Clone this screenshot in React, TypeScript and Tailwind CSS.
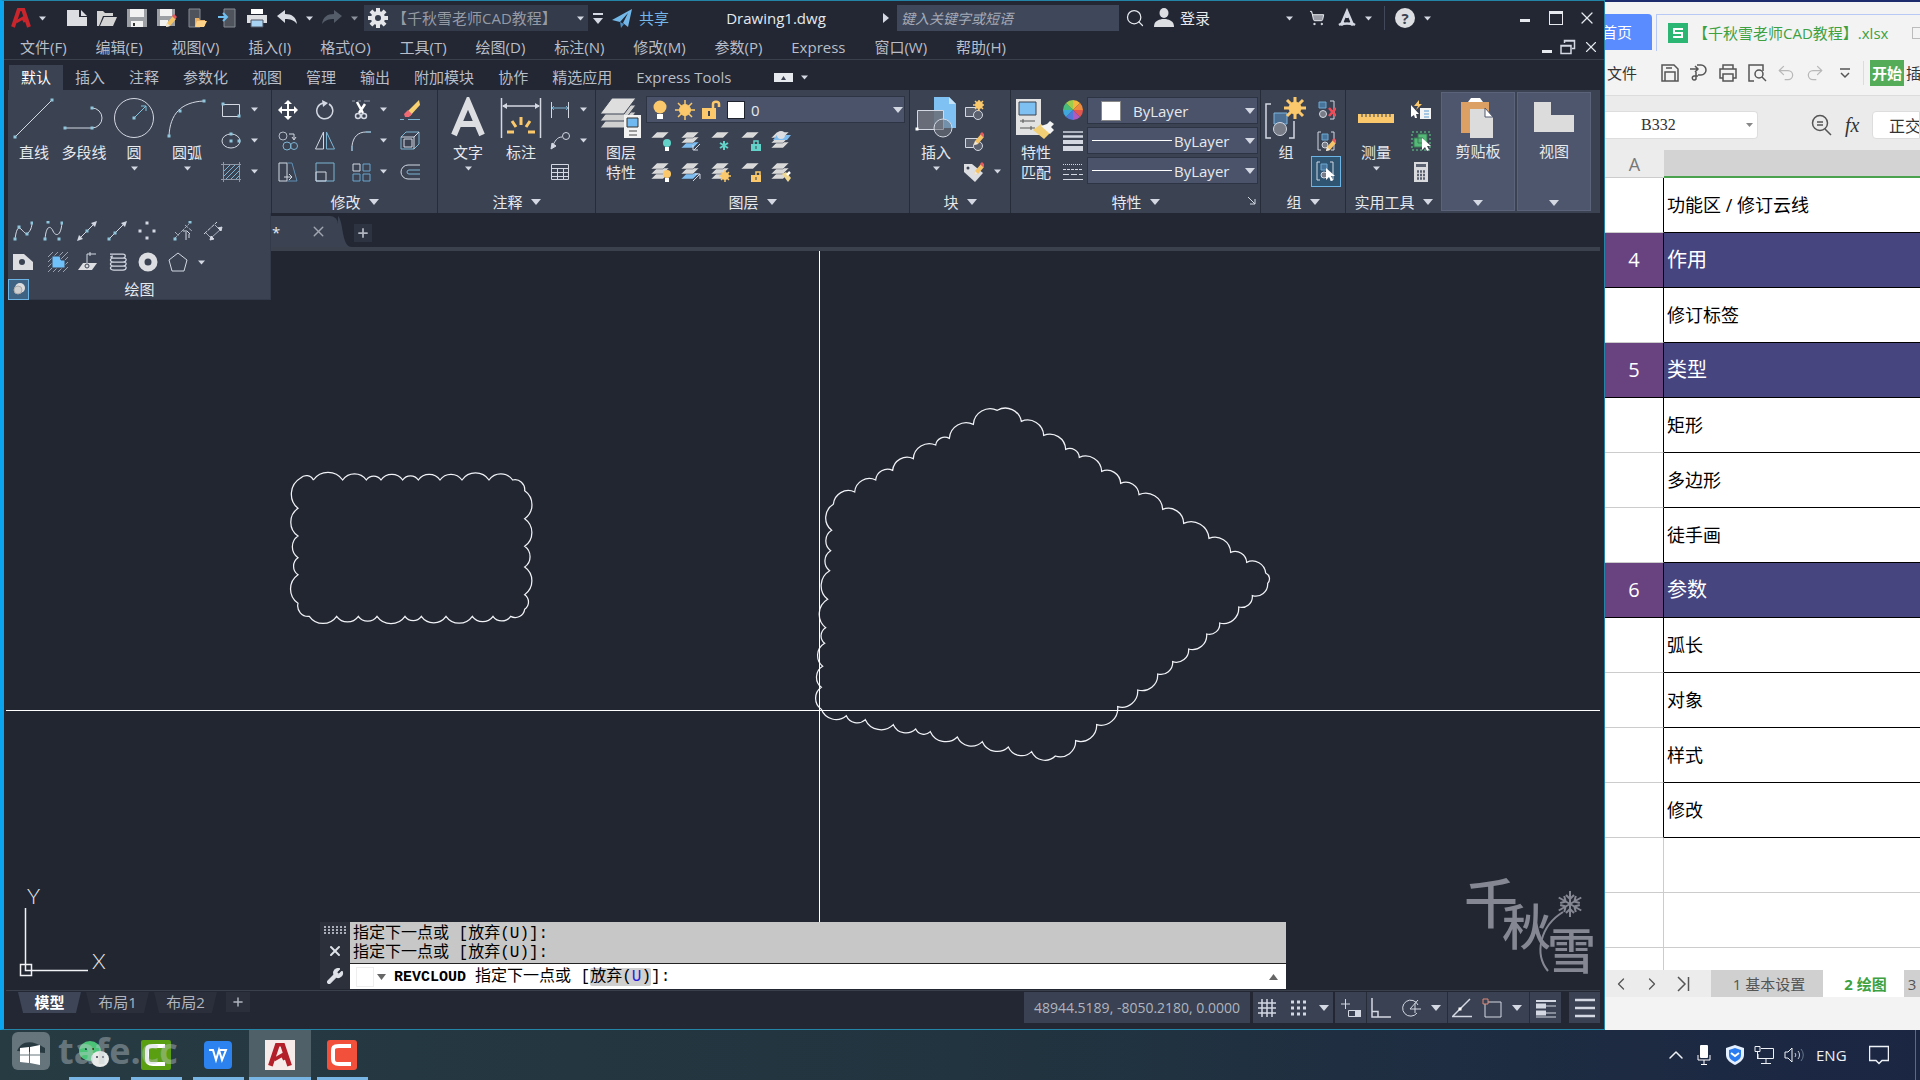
import React from 'react';
import { ChevronLeft, ChevronRight, ChevronUp, Plus, Redo2, Search, ShoppingCart, Undo2, Wrench, X } from 'lucide-react';

type Point = [number, number];

interface SvgProps {
  w?: number;
  h?: number;
  box?: string;
  children: React.ReactNode;
}

const Svg: React.FC<SvgProps> = ({ w = 20, h = 20, box, children }) => (
  <svg width={w} height={h} viewBox={box ?? `0 0 ${w} ${h}`} fill="none" stroke="#d3d8e2" className="shrink-0" aria-hidden="true">
    {children}
  </svg>
);

const Caret: React.FC<{ big?: boolean }> = ({ big }) => (
  <svg width={big ? 10 : 7} height={big ? 6 : 5} viewBox="0 0 10 6" className="shrink-0" aria-hidden="true">
    <path d="M0 0h10L5 6z" fill="#d3d8e2" />
  </svg>
);

const Dot: React.FC<{ x: number; y: number; c?: string }> = ({ x, y, c = '#8fc6dc' }) => (
  <rect x={x - 1.5} y={y - 1.5} width="3" height="3" fill={c} stroke="none" />
);

const Pencil = () => (
  <g stroke="none">
    <path d="M10 17l1-4 6-7 3 3-6 7z" fill="#f5c469" />
    <path d="M16 6l2-2 3 3-2 2z" fill="#e8585f" />
    <path d="M10 17l1-4 3 3z" fill="#e8e8e8" />
  </g>
);

/* ---------- quick access icons ---------- */

const quickIcons = [
  { name: '新建', icon: <Svg w={22}><path d="M1 2h12v7h8v9H1z" fill="#dcdee2" stroke="none" /><path d="M15 2l6 6h-6z" fill="#dcdee2" stroke="none" /></Svg> },
  { name: '打开', icon: <Svg><path d="M0 18V3h6l2 2h8v3H6L2 18z" fill="#d4d4d4" stroke="none" /><path d="M7 9h13l-4 9H3z" fill="#d4d4d4" stroke="none" /></Svg> },
  { name: '保存', icon: <Svg><path d="M0 1h20v18H0z" fill="#9c9fa3" stroke="none" /><path d="M3 1h14v8H3zM4 13h12v6H4z" fill="#f2f2f2" stroke="none" /><path d="M7 15v3" stroke="#333" strokeWidth="2" /></Svg> },
  { name: '另存为', icon: <Svg><path d="M0 1h18v17H0z" fill="#9c9fa3" stroke="none" /><path d="M3 1h12v7H3zM3 12h8v6H3z" fill="#f2f2f2" stroke="none" /><g transform="translate(-1,2)"><Pencil /></g></Svg> },
  { name: '从移动设备打开', icon: <Svg><path d="M2 1h11v18H2z" fill="#4f545c" stroke="#858a92" /><path d="M8 18v-8h4l1 2h5v6z" fill="#e9b063" stroke="none" /><path d="M10 13h10l-3 6H8z" fill="#ffd28a" stroke="none" /></Svg> },
  { name: '保存到移动设备', icon: <Svg><path d="M7 1h11v18H7z" fill="#4f545c" stroke="#858a92" /><path d="M1 9h8M6 5l4 4-4 4" stroke="#6fc0f0" strokeWidth="2" /></Svg> },
  { name: '打印', icon: <Svg><path d="M4 1h12v5H4z" fill="#fff" stroke="none" /><path d="M0 7h20v8H0z" fill="#dcdee2" stroke="none" /><path d="M4 12h12v7H4z" fill="#a9d3f2" stroke="#4a5260" /></Svg> },
];

const UndoArrow: React.FC<{ dim?: boolean }> = ({ dim }) => (
  <Svg>
    <path d={dim ? 'M20 8l-8-6v4C5 6 1 9 0 16c3-4 7-5 12-5v4z' : 'M0 8l8-6v4c7 0 11 3 12 10-3-4-7-5-12-5v4z'} fill={dim ? '#555c69' : '#d9dce2'} stroke="none" />
  </Svg>
);

const GearIcon = () => (
  <Svg box="0 0 20 20">
    <circle cx="10" cy="10" r="5" stroke="#e4e6ea" strokeWidth="4" />
    {[0, 45, 90, 135].map((a) => (
      <path key={a} d="M10 0v4M10 16v4" stroke="#e4e6ea" strokeWidth="4" transform={`rotate(${a} 10 10)`} />
    ))}
  </Svg>
);

const AutodeskA: React.FC<{ size: number; color: string }> = ({ size, color }) => (
  <Svg w={size} h={size} box="0 0 20 20">
    <path d="M2 19L8 1h4l6 18" stroke={color} strokeWidth="4" />
    <path d="M5 14l7-4 2 4" stroke={color} strokeWidth="3" />
  </Svg>
);

/* ---------- ribbon icons ---------- */

const lineIcon = <Svg w={42} h={42}><path d="M2 40L39 3" /><Dot x={2} y={40} /><Dot x={39} y={3} /></Svg>;
const polylineIcon = <Svg w={42} h={42}><path d="M2 31h27a10 10 0 000-20" /><Dot x={2} y={31} /><Dot x={29} y={31} /><Dot x={29} y={11} /></Svg>;
const circleIcon = <Svg w={42} h={42}><circle cx="21" cy="21" r="19.5" /><path d="M21 21L33 9M28 9h5v5" stroke="#7fc3dd" /><Dot x={21} y={21} /></Svg>;
const arcIcon = <Svg w={42} h={42}><path d="M3 39C4 17 15 5 38 4" /><Dot x={3} y={39} /><Dot x={14} y={14} /><Dot x={38} y={4} /></Svg>;

const rectIcon = <Svg><path d="M1.5 4.5h17v12h-17z" /><Dot x={2} y={4} /><Dot x={18} y={16} /></Svg>;
const ellipseIcon = <Svg><ellipse cx="10" cy="10" rx="9" ry="7" /><Dot x={10} y={3} /><Dot x={10} y={10} /><Dot x={18} y={10} /></Svg>;
const hatchIcon = <Svg><path d="M2.500 0v20M18.500 0v20M0 2.500h20M0 17.500h20" stroke="#8f96a5" /><path d="M3 9l6-6M3 14L14 3M5 17L18 4M10 17l8-8M15 17l3-3" stroke="#7db4d4" /></Svg>;

const moveIcon = <Svg><path d="M10 2v16M2 10h16" strokeWidth="2" stroke="#fff" /><path d="M10 0l4 4H6zM10 20l4-4H6zM0 10l4-4v8zM20 10l-4-4v8z" fill="#fff" stroke="none" /></Svg>;
const rotateIcon = <Svg><path d="M8 3a8 8 0 106 1" strokeWidth="1.500" /><path d="M7 0l6 3-5 4z" fill="#d3d8e2" stroke="none" /></Svg>;
const trimIcon = <Svg><path d="M1 1h3M7 1h3M13 1h6" stroke="#8f96a5" /><path d="M6 2l6 11M14 4L8 13" strokeWidth="2.500" stroke="#fff" /><circle cx="7" cy="16" r="2.500" strokeWidth="1.500" /><circle cx="13" cy="16" r="2.500" strokeWidth="1.500" /></Svg>;
const eraseIcon = <Svg><path d="M7 12L19 0l1 5-10 11z" fill="#f8d070" stroke="none" /><path d="M4 14l4-4 4 4-3 3H5z" fill="#f06a74" stroke="none" /><path d="M0 19.500h4M8 19.500h12" stroke="#7db4d4" /></Svg>;
const copyIcon = <Svg><circle cx="5" cy="5" r="4" stroke="#b4bac6" /><circle cx="9" cy="15" r="4" stroke="#7db4d4" /><circle cx="16" cy="15" r="3.500" stroke="#7db4d4" /><path d="M11 3h5v5M14 6l2 3 2-3" /></Svg>;
const mirrorIcon = <Svg><path d="M8.500 1v17h-8z" /><path d="M11.500 1v17h8z" stroke="#7db4d4" /></Svg>;
const filletIcon = <Svg><path d="M1 20v-5C2 6 7 1 15 1h5" /><path d="M1 20v-5M15 1h5" stroke="#7db4d4" /></Svg>;
const explodeIcon = <Svg><path d="M1 6l5-5h13v12l-5 5H1z" stroke="#7db4d4" /><path d="M1 6h13v12M14 6l5-5M4 8h8v8H4z" /></Svg>;
const stretchIcon = <Svg><path d="M1 1h8v18H1z" /><path d="M9 1h5l5 18H9" stroke="#5e8fb5" /><path d="M6 15h7M11 12l3 3-3 3" /></Svg>;
const scaleIcon = <Svg><path d="M1 1h18v18H1z" stroke="#7db4d4" /><path d="M1 10h10v9H1z" /></Svg>;
const arrayIcon = <Svg><path d="M2 2h7v7H2z" /><path d="M12 2h7v7h-7zM2 12h7v7H2zM12 12h7v7h-7z" stroke="#6aa6d0" /></Svg>;
const offsetIcon = <Svg><path d="M20 3H8a7 7 0 000 14h12" /><path d="M20 8H9a2 2 0 000 4h11" stroke="#7db4d4" /></Svg>;

const splineFitIcon = <Svg><path d="M2 19C3 9 5 5 8 8s5 6 7 4 4-5 4-11" /><Dot x={2} y={18} /><Dot x={6} y={6} /><Dot x={14} y={13} /><Dot x={19} y={2} /></Svg>;
const splineCvIcon = <Svg><path d="M2 19C3 3 8 5 10 10s8 7 9-9" /><Dot x={2} y={18} /><Dot x={5} y={1} /><Dot x={16} y={18} /><Dot x={19} y={2} /></Svg>;
const xlineIcon = <Svg><path d="M2 18L18 2" /><path d="M20 0l-6 2 4 4zM0 20l6-2-4-4z" fill="#d3d8e2" stroke="none" /><Dot x={10} y={10} /></Svg>;
const rayIcon = <Svg><path d="M2 18L18 2" /><path d="M20 0l-6 2 4 4z" fill="#d3d8e2" stroke="none" /><Dot x={2} y={18} /><Dot x={8} y={12} /></Svg>;
const pointsIcon = <Svg><Dot x={10} y={2} c="#d3d8e2" /><Dot x={10} y={17} c="#d3d8e2" /><Dot x={3} y={10} c="#d3d8e2" /><Dot x={17} y={10} c="#d3d8e2" /></Svg>;
const divideIcon = <Svg><path d="M1 18L16 3M12 4l7 6M2 11l4 4" stroke="#aab0bd" strokeDasharray="4 1" /><path d="M10 10h4l3 3M13 11v8M16 13v4" /><Dot x={17} y={1} /><Dot x={2} y={18} /></Svg>;
const measureIcon = <Svg><path d="M1 13L14 1" strokeDasharray="4 1" /><path d="M8 17L18 8M3 12l6 6M12 4l6 6" stroke="#aab0bd" /><path d="M19 6l-4 1 3 3zM7 19l4-1-3-3z" fill="#d3d8e2" /></Svg>;
const wipeoutIcon = <Svg><path d="M0 2h11l9 8v8H0z" fill="#dcdee2" stroke="none" /><circle cx="9" cy="10" r="3" fill="#3b4252" stroke="none" /></Svg>;
const regionIcon = <Svg><path d="M0 5l5-5M0 10L10 0M0 15L15 0M0 20L20 0M5 20L20 5M10 20l10-10M15 20l5-5" stroke="#9aa2b2" /><path d="M4 4h8l1 4h4v8H4z" fill="#70c0fa" stroke="#3b4252" /></Svg>;
const planeIcon = <Svg><path d="M5 11h14l-5 7H0z" fill="#dcdee2" stroke="none" /><path d="M9 14V2h9M12 0v4" /><circle cx="9" cy="14" r="2" stroke="#3b4252" /></Svg>;
const helixIcon = <Svg><path d="M2 2h13c3 0 3 4 0 4H6c-4 0-4-2-1-2M5 6c-4 1-3 4 1 4h9c4 0 4-4 1-4M5 10c-4 1-3 4 1 4h9c4 0 4-4 1-4M5 14c-4 1-3 4 1 4h9c4 0 4-4 1-4" strokeWidth="1.250" /></Svg>;
const donutIcon = <Svg><circle cx="10" cy="10" r="6.500" stroke="#dcdee2" strokeWidth="6" /></Svg>;
const polygonIcon = <Svg><path d="M10 1l9 7-3 11H4L1 8z" /></Svg>;

const textIcon = <Svg w={40} h={42}><path d="M6 38L20 5l14 33M11 27h18" strokeWidth="6" stroke="#dcdee2" /></Svg>;
const dimIcon = (
  <Svg w={42} h={42}>
    <path d="M1.500 1v40M40.500 1v40M3 9h36" strokeWidth="1.500" />
    <path d="M2 9l5-3v6zM40 9l-5-3v6z" fill="#d3d8e2" stroke="none" />
    <path d="M21 20v8M12 24l4 6M30 24l-4 6M7 35h7M28 35h7" stroke="#fbc96b" strokeWidth="3" />
  </Svg>
);
const linearIcon = <Svg><path d="M1.500 2v16M18.500 2v16" /><path d="M2 8h16M4 6L2 8l2 2M16 6l2 2-2 2" stroke="#7db4d4" /></Svg>;
const leaderIcon = <Svg><circle cx="16" cy="5" r="3.500" /><path d="M12 6c-5 0-7 4-10 10" /><path d="M1 18l1-6 4 3z" fill="#d3d8e2" /></Svg>;
const tableIcon = <Svg><path d="M1.500 2.500h17v15h-17zM1 6.500h18M1 10.500h18M1 14.500h18M7.500 6v12M13.500 6v12" /></Svg>;

const Sheets: React.FC<{ count?: number; accent?: boolean }> = ({ count = 3, accent }) => (
  <g stroke="#3b4252" strokeWidth="0.500">
    {[11, 6, 1].slice(3 - count).map((y, i) => (
      <path key={y} d={`M6 ${y}h12l-6 6H0z`} fill={accent && i === 0 ? '#7fbdf0' : '#d9d9d9'} />
    ))}
  </g>
);

const layerPropsIcon = (
  <Svg w={42} h={42}>
    <g stroke="#3b4252"><path d="M12 15h24L24 31H0z" fill="#d0d0d0" /><path d="M12 8h24L24 24H0z" fill="#d0d0d0" /><path d="M12 1h24L24 17H0z" fill="#dedede" /></g>
    <path d="M24 18h17v23H24z" fill="#f3f3f3" stroke="none" /><path d="M27 21h11v9H27z" fill="#6fb9f0" stroke="#333" /><path d="M29 34h8M29 38h8" stroke="#444" />
  </Svg>
);

const Bulb: React.FC<{ c?: string }> = ({ c = '#fbc96b' }) => (
  <g stroke="none"><circle cx="16" cy="12" r="4" fill={c} /><path d="M14 16h4v4h-4z" fill="#fff" /></g>
);
const Lock: React.FC<{ c: string; open?: boolean }> = ({ c, open }) => (
  <g><path d={open ? 'M15 13v-3h4v3' : 'M13 13v-3h4v3'} stroke={c} strokeWidth="1.500" /><path d="M10 13h10v7H10z" fill={c} stroke="none" /><path d="M15 15v3" stroke="#3b4252" /></g>
);
const MiniSun = () => (
  <g stroke="#fbc96b"><circle cx="14" cy="14" r="3.500" fill="#fbc96b" /><path d="M14 8v12M8 14h12M10 10l8 8M18 10l-8 8" strokeWidth="1.500" /></g>
);

const layerTools = [
  { name: '关', icon: <Svg><Sheets count={1} /><Bulb c="#63d3c9" /></Svg> },
  { name: '隔离', icon: <Svg><Sheets accent /><path d="M19 13l-6 6M12 14v5h5" /></Svg> },
  { name: '冻结', icon: <Svg><Sheets count={1} /><path d="M13 10v9M9 12l8 5M17 12l-8 5" stroke="#63d3c9" strokeWidth="2" /></Svg> },
  { name: '锁定', icon: <Svg><Sheets count={1} /><Lock c="#63d3c9" /></Svg> },
  { name: '置为当前', icon: <Svg><Sheets /><path d="M6 4h14l-4 5H2z" fill="#7fbdf0" stroke="none" /><circle cx="10" cy="4" r="4" fill="#dcdee2" stroke="none" /></Svg> },
  { name: '打开所有图层', icon: <Svg><Sheets /><Bulb /></Svg> },
  { name: '取消隔离', icon: <Svg><Sheets accent /><path d="M12 19l7-7M14 12h5v5" /></Svg> },
  { name: '解冻所有图层', icon: <Svg><Sheets /><MiniSun /></Svg> },
  { name: '解锁', icon: <Svg><Sheets count={1} /><Lock c="#fbc96b" open /></Svg> },
  { name: '匹配图层', icon: <Svg><Sheets /><path d="M11 12l4-2 5 6-3 4z" fill="#f0d890" stroke="none" /><path d="M16 13l3-3" strokeWidth="2.500" stroke="#fff" /></Svg> },
];

const insertIcon = (
  <Svg w={42} h={42}>
    <path d="M19 0h15l7 7v24H19z" fill="#7ec1f2" stroke="none" /><path d="M34 0v7h7z" fill="#c5e3f8" stroke="none" />
    <path d="M2.500 13.500h26v19h-26z" fill="#6d717c" fillOpacity=".9" /><circle cx="28" cy="31" r="9" fill="#6d717c" fillOpacity=".6" /><Dot x={2} y={32} c="#fff" />
  </Svg>
);
const BlockBase = () => <g><path d="M1.500 7.500h13v9h-13z" fill="#5a606d" /><circle cx="14" cy="15" r="4.500" fill="#5a606d" /></g>;
const createBlockIcon = <Svg><BlockBase /><g transform="translate(1,-9)"><MiniSun /></g></Svg>;
const editBlockIcon = <Svg><BlockBase /><g transform="translate(0,-3)"><Pencil /></g></Svg>;
const editAttrIcon = <Svg><path d="M0 2h8l11 9-8 9L0 10z" fill="#dcdee2" stroke="none" /><circle cx="4" cy="6" r="1.500" fill="#3b4252" stroke="none" /><g transform="translate(0,-4)"><Pencil /></g></Svg>;

const matchIcon = (
  <Svg w={42} h={42}>
    <path d="M1 2h25v36H1z" fill="#e2e2e2" stroke="none" /><path d="M4 5h17v13H4z" fill="#7fc0f2" stroke="#3a4250" />
    <path d="M5 24h15M5 31h15M8 22v4M16 29v4" stroke="#555" />
    <path d="M18 33l8-6 9 9-6 6z" fill="#f2cf74" stroke="none" /><path d="M26 29l9 8 4-4-3-3 3-3-4-3-3 3z" fill="#f4f4f4" stroke="none" />
  </Svg>
);

const wheel = ['#f5b73d', '#f08a3c', '#e4574f', '#b05ac0', '#5277d8', '#3fa7dc', '#46bb7c', '#9fcc4b'];
const colorWheelIcon = (
  <Svg>
    {wheel.map((c, i) => (
      <path key={c} d="M10 10L10 0A10 10 0 0117.070 2.930z" fill={c} stroke="none" transform={`rotate(${i * 45} 10 10)`} />
    ))}
  </Svg>
);
const weightIcon = <Svg><path d="M0 1h20" strokeWidth="1.500" /><path d="M0 5.500h20" strokeWidth="2.500" /><path d="M0 11h20" strokeWidth="4" /><path d="M0 17.500h20" strokeWidth="5" /></Svg>;
const linetypeIcon = <Svg><path d="M0 2.500h20" strokeDasharray="1 1" /><path d="M0 7.500h20" strokeDasharray="3 1" /><path d="M0 12.500h20" strokeDasharray="6 2" /><path d="M0 17.500h20" /></Svg>;

const groupIcon = (
  <Svg w={42} h={42}>
    <path d="M6 7H1v34h5M24 41h5V24" strokeWidth="1.500" />
    <path d="M9 16h13v11H9z" fill="#4c6f94" stroke="#7fb5dd" /><circle cx="15" cy="32" r="6.500" fill="#777c86" />
    <g stroke="#fbc96b"><circle cx="30" cy="11" r="6" fill="#fbc96b" /><path d="M30 0v22M19 11h22M22 3l16 16M38 3L22 19" strokeWidth="3" /></g>
  </Svg>
);
const GroupMini = () => <g><path d="M5 1H2v18h3M15 1h3v18h-3" /><path d="M6 3h6v6H6z" fill="#46749a" stroke="#6fa9d2" /><circle cx="9" cy="14" r="3" fill="#777c86" /></g>;
const Cursor = () => <path d="M11 7v12l3-3 2 4 2-1-2-4h4z" fill="#fff" stroke="none" />;
const ungroupIcon = <Svg><path d="M14 1h4v18h-4" /><path d="M3 2h7v6H3z" fill="#46749a" stroke="#6fa9d2" /><circle cx="7" cy="14" r="3.500" fill="#777c86" /><path d="M13 8l7 8M20 8l-7 8" stroke="#f04a56" strokeWidth="2.500" /></Svg>;
const groupEditIcon = <Svg><GroupMini /><g transform="translate(0,3)"><Pencil /></g></Svg>;
const groupSelectIcon = <Svg w={22} h={22}><GroupMini /><Cursor /></Svg>;

const rulerIcon = <Svg w={42} h={42}><path d="M3 17h36v9H3z" fill="#fbc96b" stroke="none" /><path d="M7 16v4M11 16v4M15 16v4M19 16v4M23 16v4M27 16v4M31 16v4M35 16v4" stroke="#3b4252" /></Svg>;
const quickSelectIcon = <Svg><path d="M9 8h11v11H9z" fill="#f4f4f4" stroke="none" /><path d="M13 11h5M13 14h5M13 17h5" stroke="#5a9ad0" /><path d="M8 0L3 6h4L5 10l6-6H8z" fill="#fbc96b" stroke="none" /><path d="M0 5l8 9H5l1 4H4l-1-3-3 2z" fill="#fff" stroke="none" /></Svg>;
const selectAllIcon = <Svg><path d="M1 1h18v18H1z" strokeDasharray="2 2" stroke="#63d38f" /><path d="M7 3h9v9H7zM3 7h9v9H3z" fill="#54b878" stroke="#3b7a55" /><Cursor /></Svg>;
const calcIcon = <Svg><path d="M3 0h14v20H3z" fill="#d9dade" stroke="none" /><path d="M5 2h10v3H5z" fill="#596070" stroke="none" /><path d="M6 9.500h8M6 13h8M6 16.500h8" strokeWidth="2.500" strokeDasharray="2 1" stroke="#596070" /></Svg>;

const pasteIcon = (
  <Svg w={42} h={42}>
    <path d="M4 5h28v31H4z" fill="#dca064" stroke="none" /><path d="M11 5l3-4h9l3 4z" fill="#fff" stroke="none" />
    <path d="M13 12h15l8 8v21H13z" fill="#dcdcdc" stroke="none" /><path d="M28 11v9h8z" fill="#fff" stroke="#4e5870" />
  </Svg>
);
const viewIcon = <Svg w={42} h={42}><path d="M1 5h17v13h23v17H1z" fill="#dcdcdc" stroke="none" /></Svg>;

/* ---------- ribbon building blocks ---------- */

interface BigButtonProps {
  icon: React.ReactNode;
  label: string;
  second?: string;
  caret?: boolean;
  width: string;
}

const BigButton: React.FC<BigButtonProps> = ({ icon, label, second, caret, width }) => (
  <button className={`${width} flex flex-col items-center shrink-0 pt-[3px] whitespace-nowrap`}>
    {icon}
    <span className="mt-[3px] leading-5">{label}</span>
    {second && <span className="leading-5">{second}</span>}
    {caret && <span className="mt-1"><Caret /></span>}
  </button>
);

const IconButton: React.FC<{ name: string; icon: React.ReactNode; active?: boolean }> = ({ name, icon, active }) => (
  <button aria-label={name} className={`h-[31px] flex items-center justify-center ${active ? 'bg-[#2f5573] border border-[#6cb4e6]' : ''}`}>
    {icon}
  </button>
);

const CaretButton: React.FC<{ name: string }> = ({ name }) => (
  <button aria-label={name} className="h-[31px] flex items-center justify-center"><Caret /></button>
);

const Panel: React.FC<{ title: string; width: string; children: React.ReactNode; launcher?: boolean }> = ({ title, width, children, launcher }) => (
  <section className={`${width} relative shrink-0 flex flex-col border-l border-[#262c38]`}>
    <div className="flex h-[102px] pt-1">{children}</div>
    <button className="flex items-center justify-center gap-2 leading-5">
      {title} <Caret big />
    </button>
    {launcher && (
      <span className="absolute right-1 bottom-2">
        <Svg w={8} h={8}><path d="M0 0l7 7M7 2v5H2" /></Svg>
      </span>
    )}
  </section>
);

const ClosedPanel: React.FC<{ icon: React.ReactNode; label: string }> = ({ icon, label }) => (
  <button className="w-[74px] shrink-0 mr-[2px] mb-[2px] mt-[2px] flex flex-col items-center bg-[#4d566d] border border-[#5a637a] pt-1">
    {icon}
    <span className="mt-[2px] leading-5">{label}</span>
    <span className="mt-auto mb-1"><Caret big /></span>
  </button>
);

const PropertySelect: React.FC<{ name: string; swatch?: boolean }> = ({ name, swatch }) => (
  <label className="h-[27px] flex items-center bg-[#4a5369] border border-[#2d3443] pr-[2px]">
    {swatch ? <span className="ml-[13px] mr-3 size-5 bg-white border border-[#888]" /> : <span className="ml-1 mr-[2px] w-[80px] h-px bg-white" />}
    <select aria-label={name} className="flex-1 min-w-0 appearance-none bg-transparent outline-none text-[#e6e9ee]">
      <option>ByLayer</option>
    </select>
    <Caret big />
  </label>
);

const modifyTools: [string, React.ReactNode, boolean][] = [
  ['移动', moveIcon, false], ['旋转', rotateIcon, false], ['修剪', trimIcon, true], ['删除', eraseIcon, false],
  ['复制', copyIcon, false], ['镜像', mirrorIcon, false], ['圆角', filletIcon, true], ['分解', explodeIcon, false],
  ['拉伸', stretchIcon, false], ['缩放', scaleIcon, false], ['阵列', arrayIcon, true], ['偏移', offsetIcon, false],
];

const DrawPanel = () => (
  <section className="relative z-10 w-[263px] shrink-0 bg-[#3b4252]">
    <div className="flex pt-1 h-[102px]">
      <BigButton icon={lineIcon} label="直线" width="w-[52px]" />
      <BigButton icon={polylineIcon} label="多段线" width="w-[48px]" />
      <BigButton icon={circleIcon} label="圆" caret width="w-[52px]" />
      <BigButton icon={arcIcon} label="圆弧" caret width="w-[54px]" />
      <div className="grid grid-cols-[34px_12px] content-start">
        <IconButton name="矩形" icon={rectIcon} /><CaretButton name="矩形选项" />
        <IconButton name="椭圆" icon={ellipseIcon} /><CaretButton name="椭圆选项" />
        <IconButton name="图案填充" icon={hatchIcon} /><CaretButton name="图案填充选项" />
      </div>
    </div>
    {/* slide-out part hangs over the file tabs */}
    <div className="absolute left-0 top-[123px] w-full h-[87px] bg-[#3b4252] border-r border-b border-[#333a49]">
      <div className="flex h-[35px] items-center pl-[5px] gap-[10px]">
        {splineFitIcon}{splineCvIcon}
        <span className="flex gap-[10px] ml-1">{xlineIcon}{rayIcon}{pointsIcon}</span>
        <span className="flex gap-[10px] ml-[6px]">{divideIcon}{measureIcon}</span>
      </div>
      <div className="flex h-[28px] items-center pl-[5px] gap-[10px]">
        {wipeoutIcon}
        <span className="flex gap-[10px] ml-[5px]">{regionIcon}{planeIcon}{helixIcon}{donutIcon}{polygonIcon}</span>
        <Caret />
      </div>
      <div className="flex items-center h-[22px] mt-[2px]">
        <button aria-label="固定面板" className="size-[21px] flex items-center justify-center bg-[#3f6382] border border-[#6cb4e6]">
          <Svg w={14} h={14}><circle cx="8" cy="6" r="5" fill="#dedede" stroke="none" /><circle cx="6" cy="8" r="4" fill="#cfcfcf" stroke="#aaa" /></Svg>
        </button>
        <span className="flex-1 text-center pr-5">绘图</span>
      </div>
    </div>
  </section>
);

const Ribbon = () => (
  <div className="flex h-[123px] ml-1 mr-1 bg-[#3b4252] text-[#e6e9ee]">
    <DrawPanel />
    <Panel title="修改" width="w-[166px]">
      <div className="grid grid-cols-[32px_42px_30px_14px_40px] content-start">
        {modifyTools.map(([name, icon, more]) => (
          <React.Fragment key={name}>
            <IconButton name={name} icon={icon} />
            {more && <CaretButton name={`${name}选项`} />}
          </React.Fragment>
        ))}
      </div>
    </Panel>
    <Panel title="注释" width="w-[158px]">
      <BigButton icon={textIcon} label="文字" caret width="w-[60px]" />
      <BigButton icon={dimIcon} label="标注" width="w-[46px]" />
      <div className="grid grid-cols-[32px_14px] content-start">
        <IconButton name="线性" icon={linearIcon} /><CaretButton name="线性选项" />
        <IconButton name="引线" icon={leaderIcon} /><CaretButton name="引线选项" />
        <IconButton name="表格" icon={tableIcon} />
      </div>
    </Panel>
    <Panel title="图层" width="w-[314px]">
      <BigButton icon={layerPropsIcon} label="图层" second="特性" width="w-[50px]" />
      <div className="flex-1 pr-1">
        <label className="h-[27px] mt-[2px] mb-[2px] flex items-center gap-[6px] pl-1 pr-px bg-[#4a5369] border border-[#2d3443]">
          <Svg w={18}><circle cx="9" cy="7" r="6.500" fill="#fbc96b" stroke="none" /><path d="M6 14h6v5H6z" fill="#fff" stroke="none" /></Svg>
          <Svg><g stroke="#fbc96b"><circle cx="10" cy="10" r="5.500" fill="#fbc96b" /><path d="M10 0v20M0 10h20M3 3l14 14M17 3L3 17" strokeWidth="1.500" /></g></Svg>
          <Svg><path d="M1 8h14v11H1z" fill="#fbc96b" stroke="none" /><path d="M12 8V4c0-3 6-3 6 0v3" stroke="#fbc96b" strokeWidth="2.500" /><path d="M8 11v5" stroke="#3b4252" strokeWidth="2" /></Svg>
          <span className="size-[18px] bg-white border border-[#1d222c] shrink-0" />
          <select aria-label="当前图层" className="flex-1 min-w-0 appearance-none bg-transparent outline-none"><option>0</option></select>
          <Caret big />
        </label>
        <div className="grid grid-cols-[repeat(5,30px)]">
          {layerTools.map((t) => <IconButton key={t.name} name={t.name} icon={t.icon} />)}
        </div>
      </div>
    </Panel>
    <Panel title="块" width="w-[101px]">
      <BigButton icon={insertIcon} label="插入" caret width="w-[52px]" />
      <div className="grid grid-cols-[24px_22px] content-start">
        <IconButton name="创建块" icon={createBlockIcon} /><span />
        <IconButton name="编辑块" icon={editBlockIcon} /><span />
        <IconButton name="编辑属性" icon={editAttrIcon} /><CaretButton name="编辑属性选项" />
      </div>
    </Panel>
    <Panel title="特性" width="w-[250px]" launcher>
      <BigButton icon={matchIcon} label="特性" second="匹配" width="w-[50px]" />
      <div className="grid grid-cols-[24px] content-start">
        <IconButton name="颜色" icon={colorWheelIcon} />
        <IconButton name="线宽" icon={weightIcon} />
        <IconButton name="线型" icon={linetypeIcon} />
      </div>
      <div className="flex-1 flex flex-col gap-[3px] pt-[3px] pl-[2px] pr-[2px]">
        <PropertySelect name="对象颜色" swatch />
        <PropertySelect name="线宽" />
        <PropertySelect name="线型" />
      </div>
    </Panel>
    <Panel title="组" width="w-[85px]">
      <BigButton icon={groupIcon} label="组" width="w-[50px]" />
      <div className="grid grid-cols-[30px] content-start">
        <IconButton name="解除编组" icon={ungroupIcon} />
        <IconButton name="组编辑" icon={groupEditIcon} />
        <IconButton name="启用组选择" icon={groupSelectIcon} active />
      </div>
    </Panel>
    <Panel title="实用工具" width="w-[96px]">
      <BigButton icon={rulerIcon} label="测量" caret width="w-[60px]" />
      <div className="grid grid-cols-[30px] content-start">
        <IconButton name="快速选择" icon={quickSelectIcon} />
        <IconButton name="全部选择" icon={selectAllIcon} />
        <IconButton name="快速计算器" icon={calcIcon} />
      </div>
    </Panel>
    <ClosedPanel icon={pasteIcon} label="剪贴板" />
    <ClosedPanel icon={viewIcon} label="视图" />
  </div>
);

/* ---------- title bar and menus ---------- */

const TitleBar = () => (
  <header className="flex items-center h-[34px] text-[#e6e9ee]">
    <button aria-label="应用程序菜单" className="w-[58px] pr-[10px] flex items-center justify-center gap-[8px]">
      <AutodeskA size={20} color="#c8252c" /> <Caret />
    </button>
    {quickIcons.map((q) => (
      <button key={q.name} aria-label={q.name} className="w-[30px] flex justify-center">{q.icon}</button>
    ))}
    <button aria-label="放弃" className="w-[30px] flex justify-center"><UndoArrow /></button>
    <button aria-label="放弃列表" className="w-[15px] flex justify-center"><Caret /></button>
    <button aria-label="重做" className="w-[30px] flex justify-center"><UndoArrow dim /></button>
    <button aria-label="重做列表" className="w-[15px] flex justify-center opacity-60"><Caret /></button>
    <label className="ml-[2px] w-[224px] h-[26px] flex items-center bg-[#343b4a] pl-1 pr-1">
      <GearIcon />
      <select aria-label="工作空间" className="flex-1 min-w-0 ml-1 appearance-none bg-transparent outline-none text-[#959aa5]">
        <option>【千秋雪老师CAD教程】</option>
      </select>
      <Caret />
    </label>
    <button aria-label="自定义快速访问工具栏" className="w-5 flex flex-col items-center gap-[3px]">
      <span className="w-[10px] h-[2px] bg-[#d3d8e2]" /><Caret big />
    </button>
    <button className="ml-1 flex items-center gap-[7px] text-[#74b8ea]">
      <Svg><path d="M0 12L20 1l-4 18-5-4 5-10-8 9z" fill="#74b8ea" stroke="none" /><path d="M8 14l1 6 3-4z" fill="#4b8fc4" stroke="none" /></Svg>
      共享
    </button>
    <h1 className="w-[214px] text-center">Drawing1.dwg</h1>
    <Svg w={6} h={10}><path d="M0 0l6 5-6 5z" fill="#d3d8e2" stroke="none" /></Svg>
    <input aria-label="搜索" placeholder="键入关键字或短语" className="ml-2 w-[222px] h-[26px] px-1 bg-[#3f475a] italic outline-none text-[14px] placeholder:text-[#a4aab6]" />
    <button aria-label="搜索" className="w-[32px] flex justify-center"><Search size={20} strokeWidth={1.5} /></button>
    <button className="ml-[3px] flex items-center gap-[6px]">
      <Svg><ellipse cx="10" cy="5" rx="4.500" ry="5" fill="#dcdee2" stroke="none" /><path d="M0 19c0-6 4-7 8-8h4c4 1 8 2 8 8z" fill="#dcdee2" stroke="none" /></Svg>
      登录
    </button>
    <div className="ml-auto flex items-center">
      <Caret />
      <span className="ml-4"><ShoppingCart size={16} fill="#9a9da5" strokeWidth={1.5} /></span>
      <span className="ml-3 mr-2"><Svg><path d="M10 3L4 17c2-2 10-2 12 0zM10 3v7M2 17l5-3M18 17l-5-3" strokeWidth="2.500" /></Svg></span>
      <Caret />
      <span className="ml-3 mr-[10px] w-px h-6 bg-[#40485a]" />
      <button aria-label="帮助" className="flex items-center gap-[9px]">
        <span className="size-5 rounded-full bg-[#dcdee2] text-[#3b4252] font-bold leading-5 text-center">?</span><Caret />
      </button>
      <button aria-label="最小化" className="ml-[78px] w-[32px] h-5 flex items-start pt-[11px] justify-center"><span className="w-[10px] h-[3px] bg-[#e6e9ee]" /></button>
      <button aria-label="最大化" className="w-[30px] flex justify-center"><span className="w-[14px] h-[14px] border border-t-[3px] border-[#e6e9ee]" /></button>
      <button aria-label="关闭" className="w-[33px] flex justify-center pr-px"><X size={20} strokeWidth={1.5} /></button>
    </div>
  </header>
);

const menus = ['文件(F)', '编辑(E)', '视图(V)', '插入(I)', '格式(O)', '工具(T)', '绘图(D)', '标注(N)', '修改(M)', '参数(P)', 'Express', '窗口(W)', '帮助(H)'];
const ribbonTabs = ['默认', '插入', '注释', '参数化', '视图', '管理', '输出', '附加模块', '协作', '精选应用', 'Express Tools'];

const MenuBar = () => (
  <nav className="flex items-center h-[25px] pl-4 pr-1 border-b border-[#3a404c] text-[#b9bec8]">
    <div className="flex justify-between w-[986px]">
      {menus.map((m) => <button key={m}>{m}</button>)}
    </div>
    <div className="ml-auto flex items-center text-[#e6e9ee]">
      <span className="w-[10px] h-[3px] bg-[#e6e9ee] mt-2 mr-2" />
      <Svg w={16} h={16}><path d="M4.500 4V1.500h10v8H12M4 2h11" strokeWidth="1.500" /><path d="M1 6.500h10v8H1zM1 7h10" strokeWidth="1.500" /></Svg>
      <X size={18} strokeWidth={1.500} className="ml-[6px]" />
    </div>
  </nav>
);

const RibbonTabs = () => (
  <div className="flex items-end h-[30px] pl-[5px] text-[#b9bec8]">
    {ribbonTabs.map((t, i) => (
      <button key={t} className={`h-[25px] px-3 pb-[2px] ${i === 0 ? 'bg-[#3b4252] text-white' : ''}`}>{t}</button>
    ))}
    <button aria-label="最小化功能区" className="h-[25px] ml-[30px] flex items-center gap-2">
      <span className="w-[19px] h-[9px] bg-[#e6e9ee] flex items-center justify-center"><Svg w={5} h={4}><path d="M0 4l2.500-4L5 4z" fill="#3b4252" stroke="none" /></Svg></span>
      <Caret />
    </button>
  </div>
);

const FileTabs = () => (
  <div className="flex items-end h-[38px] mx-1 border-b-4 border-[#3b414d]">
    <div className="flex items-center h-[31px] w-[330px] pl-[264px] bg-[#3b4252] text-[#e6e9ee] rounded-tr-lg">
      <span className="w-[38px]">*</span>
      <button aria-label="关闭图形" className="text-[#a0a5b0]"><X size={17} /></button>
    </div>
    <Svg w={14} h={31}><path d="M0 0c6 6 3 31 14 31H0z" fill="#3b4252" stroke="none" /></Svg>
    <button aria-label="新图形" className="ml-[2px] mb-[5px] size-[18px] flex items-center justify-center bg-[#2d3340] text-[#b0b5bf]"><Plus size={14} strokeWidth={3} /></button>
  </div>
);

/* ---------- model space ---------- */

// Revision cloud: one bulging arc between every two neighbouring points, clockwise.
const cloudPath = (points: Point[], left: number, top: number) => {
  const pts = points.map(([x, y]): Point => [left + x / 3, top + y / 3]);
  const arcs = pts.map((p, i) => {
    const next = pts[(i + 1) % pts.length];
    const r = Math.hypot(next[0] - p[0], next[1] - p[1]) * 0.61;
    return `A${r} ${r} 0 0 1 ${next[0]} ${next[1]}`;
  });
  return `M${pts[0][0]} ${pts[0][1]}${arcs.join('')}`;
};

const rectangleCloud: Point[] = [
  [130, 90], [218, 90], [289, 90], [333, 90], [398, 90], [445, 90], [510, 90], [576, 90], [657, 90], [728, 90],
  [764, 122], [764, 206], [764, 289], [764, 351], [764, 434], [764, 478], [722, 499], [669, 499], [607, 499],
  [528, 499], [454, 499], [405, 499], [321, 499], [265, 499], [200, 499], [118, 499], [84, 460], [84, 374],
  [84, 323], [84, 258], [84, 175], [92, 84],
];

const polygonCloud: Point[] = [
  [100, 343], [164, 306], [227, 270], [278, 241], [340, 206], [407, 165], [448, 145], [520, 103], [592, 61],
  [664, 94], [731, 136], [797, 178], [838, 202], [905, 244], [962, 280], [1017, 314], [1088, 358], [1151, 400],
  [1227, 445], [1292, 487], [1340, 517], [1397, 549], [1403, 580], [1357, 617], [1316, 651], [1259, 699],
  [1220, 732], [1166, 777], [1118, 815], [1073, 852], [1013, 900], [953, 950], [890, 1004], [827, 1052],
  [766, 1098], [695, 1085], [625, 1071], [547, 1055], [472, 1041], [391, 1025], [347, 1017], [280, 1004],
  [196, 989], [139, 977], [64, 958], [64, 892], [68, 829], [74, 760], [77, 713], [83, 628], [89, 542], [92, 482], [95, 421],
];

const Watermark = () => (
  <svg width="132" height="128" viewBox="0 -12 132 128" className="absolute right-1 bottom-0 overflow-visible font-['Noto_Sans_CJK_SC',sans-serif] font-medium" fill="#858892">
    <text x="0" y="50" fontSize="54">千</text>
    <text x="38" y="71" fontSize="49">秋</text>
    <text x="83" y="95" fontSize="49">雪</text>
    <g stroke="#858892" strokeWidth="2" fill="none">
      {[0, 60, 120].map((a) => (
        <path key={a} d="M106 19v26M102 23l4 4 4-4M102 41l4-4 4 4" transform={`translate(0 -2) rotate(${a} 106 32)`} />
      ))}
      <path d="M99 38C76 52 70 80 84 97" />
    </g>
  </svg>
);

const CommandLine = () => (
  <div className="absolute left-[314px] bottom-px w-[966px] flex font-['Liberation_Mono','Noto_Sans_CJK_SC',monospace] text-[16px] text-black">
    <div className="w-[30px] bg-[#2b303b] flex flex-col items-center justify-between py-[4px] text-[#dfe2e8]">
      <Svg w={22} h={8}><path d="M0 1h22M0 4h22M0 7h22" strokeDasharray="2 2" strokeWidth="1.500" /></Svg>
      <X size={16} strokeWidth={3} />
      <Wrench size={18} fill="#dfe2e8" strokeWidth={1.500} />
    </div>
    <div className="flex-1">
      <div className="h-[41px] bg-[#c7c7c7] px-[3px] pt-[3px] leading-[19px]">
        <p>指定下一点或 [放弃(U)]:</p>
        <p>指定下一点或 [放弃(U)]:</p>
      </div>
      <div className="h-[26px] bg-white border-t border-[#222] flex items-center pl-[6px] pr-2 leading-5">
        <span className="w-[18px] h-5 border border-[#eee]" />
        <svg width="9" height="6" className="ml-[3px] mr-2"><path d="M0 0h9L4.500 6z" fill="#666" /></svg>
        <label htmlFor="command" className="whitespace-pre pt-[2px]"><b className="text-[15px]">REVCLOUD </b>指定下一点或 [<span className="bg-[#d0d0d0] rounded-xs">放弃(<span className="text-[#2a1fe0]">U</span>)</span>]:</label>
        <input id="command" className="flex-1 min-w-0 outline-none" />
        <svg width="9" height="6"><path d="M0 6h9L4.500 0z" fill="#666" /></svg>
      </div>
    </div>
  </div>
);

const ModelSpace = () => (
  <main className="relative flex-1 min-h-0 ml-[2px] mr-1 overflow-hidden bg-[#222631]">
    <svg className="absolute inset-0 w-full h-full" fill="none" stroke="#f0f2f6">
      {/* origin sits at the top left corner of the whole window */}
      <g transform="translate(-6 -251)">
        <path d={cloudPath(rectangleCloud, 270, 450)} strokeWidth="1.250" />
        <path d={cloudPath(polygonCloud, 800, 390)} strokeWidth="1.250" />
        <path d="M819.500 251V930M6 710.500H1604" stroke="#fff" />
        <path d="M25.500 908v62.500H88M20.500 964.500h11v11h-11z" strokeWidth="1.500" />
        <g fill="#e4e6ea" stroke="none" fontSize="22" className="font-['Lato',sans-serif] font-light">
          <text x="27" y="904">Y</text>
          <text x="92" y="969">X</text>
        </g>
      </g>
    </svg>
    <Watermark />
    <CommandLine />
  </main>
);

/* ---------- status bar ---------- */

const layoutTabs = ['模型', '布局1', '布局2'];

const StatusBar = () => (
  <footer className="flex h-[39px] pt-px ml-[2px] mr-1 border-t border-[#3a404c] text-[#b0b5bf]">
    <div className="flex items-start pl-3 gap-[5px]">
      {layoutTabs.map((t, i) => (
        <button
          key={t}
          className={`h-[21px] pb-px leading-5 w-[63px] [clip-path:polygon(0_0,100%_0,92%_100%,8%_100%)] ${i === 0 ? 'bg-[#3d4556] text-white font-bold' : 'bg-[#2a2f3b]'}`}
        >
          {t}
        </button>
      ))}
      <button aria-label="新建布局" className="ml-1 w-6 h-5 flex items-center justify-center bg-[#2a2f3b]"><Plus size={14} strokeWidth={2.500} /></button>
    </div>
    <div className="ml-auto flex h-[31px] text-[14px]">
      <span className="w-[226px] bg-[#3a4152] flex items-center justify-center whitespace-nowrap mr-[3px]">48944.5189, -8050.2180, 0.0000</span>
      <div className="flex items-center gap-3 w-[80px] pl-1 bg-[#3a4152] mr-[2px]">
        <Svg><path d="M5 1v18M10 1v18M15 1v18M1 5h18M1 10h18M1 15h18" strokeWidth="1.500" /></Svg>
        <Svg w={18} h={18}><path d="M2 3h15M2 9h15M2 15h15" strokeWidth="3" strokeDasharray="3 3" /></Svg>
        <Caret big />
      </div>
      <div className="flex items-center justify-center w-[32px] bg-[#3a4152] border-r border-[#262c38]">
        <Svg><path d="M0 6h9M4.500 1v10" /><path d="M7.500 12.500h12v6h-12z" /><path d="M14 12h6v7h-6z" fill="#d3d8e2" stroke="none" /></Svg>
      </div>
      <div className="flex items-center gap-[10px] w-[81px] pl-1 bg-[#3a4152] border-r border-[#262c38]">
        <Svg><path d="M1 0v19h19M1 13.500h6V19" strokeWidth="1.500" /></Svg>
        <Svg><path d="M17 7a8 8 0 10-1 8M9 11L17 2M9 11h11M14 5v10" /></Svg>
        <Caret big />
      </div>
      <div className="flex items-center gap-[10px] w-[82px] pl-1 bg-[#3a4152] border-r border-[#262c38]">
        <Svg><path d="M0 18.500h20M1 18L18 1" strokeWidth="1.500" /><Dot x={8} y={11} c="#fff" /></Svg>
        <Svg><path d="M6 4h13v15H3V6" /><path d="M1 1h5v5H1z" stroke="#e08a78" /></Svg>
        <Caret big />
      </div>
      <div className="flex items-center justify-center w-[31px] bg-[#3a4152] mr-2">
        <Svg><path d="M0 3h20" strokeWidth="2" /><path d="M0 8h10M0 15h10" strokeWidth="5" /><path d="M10 8h10M10 15h10M0 19h20" /></Svg>
      </div>
      <button aria-label="自定义" className="flex items-center justify-center w-[31px] bg-[#3a4152]">
        <Svg><path d="M0 2h20M0 10h20M0 18h20" strokeWidth="2.500" /></Svg>
      </button>
    </div>
  </footer>
);

/* ---------- spreadsheet window ---------- */

const rows: { no?: string; text: string }[] = [
  { text: '功能区 / 修订云线' },
  { no: '4', text: '作用' },
  { text: '修订标签' },
  { no: '5', text: '类型' },
  { text: '矩形' },
  { text: '多边形' },
  { text: '徒手画' },
  { no: '6', text: '参数' },
  { text: '弧长' },
  { text: '对象' },
  { text: '样式' },
  { text: '修改' },
];

const sheetIcons = [
  <Svg key="save"><path d="M2 2h12l4 4v12H2zM5 18V9h10v9M6 5h6" stroke="#555" strokeWidth="1.500" /></Svg>,
  <Svg key="export"><path d="M1 6h8M6 3l3 3-3 3M8 2h4a5 5 0 010 10H9M7 9v7a2 2 0 11-2-3h4" stroke="#555" strokeWidth="1.500" /></Svg>,
  <Svg key="print"><path d="M5 6V2h10v4M5 15H2V6h16v9h-3M5 11h10v7H5z" stroke="#555" strokeWidth="1.500" /></Svg>,
  <Svg key="preview"><path d="M7 18H2V2h14v6" stroke="#555" strokeWidth="1.500" /><circle cx="12" cy="11" r="4" stroke="#555" strokeWidth="1.500" /><path d="M15 14l4 4" stroke="#555" strokeWidth="1.500" /></Svg>,
];

const Spreadsheet = () => (
  <aside className="w-[315px] shrink-0 flex flex-col overflow-hidden whitespace-nowrap bg-[#f3f3f4] border-t-2 border-[#1d2a6b] text-[#333]">
    <div className="flex h-[49px] pt-3">
      <div className="w-[47px] shrink-0 h-[36px] bg-[#5b8cff] text-white flex items-center justify-end pr-5 rounded-tr-sm overflow-hidden">
        <span>首页</span>
      </div>
      <div className="flex-1 min-w-0 ml-1 flex items-center pl-[11px] border-t border-l border-[#b9c9f5] text-[#3da142]">
        <span className="size-5 shrink-0 bg-[#2bb673] flex items-center justify-center mr-[5px]"><Svg w={12} h={12}><path d="M11 2H2v4h8v4H1" stroke="#fff" strokeWidth="2" /></Svg></span>
        <span>【千秋雪老师CAD教程】.xlsx</span>
        <span className="ml-6 size-3 border border-[#bbb] shrink-0" />
      </div>
    </div>
    <div className="flex items-center h-[45px] border-b border-[#dcdcdc]">
      <button className="pl-[2px] w-[55px] shrink-0 text-left">文件</button>
      <div className="flex items-center gap-[9px] shrink-0">
        {sheetIcons}
        <Undo2 size={20} color="#b8b8b8" strokeWidth={1.5} />
        <Redo2 size={20} color="#b8b8b8" strokeWidth={1.5} />
        <span className="pl-[5px]"><Svg w={12} h={12}><path d="M1 2h10M2 6l4 4 4-4" stroke="#555" strokeWidth="1.500" /></Svg></span>
      </div>
      <span className="ml-3 w-px h-6 shrink-0 bg-[#e0d8e8]" />
      <button className="ml-[6px] w-[34px] h-[26px] shrink-0 bg-[#55ac58] text-white font-bold">开始</button>
      <button className="ml-[2px] shrink-0">插入</button>
    </div>
    <div className="flex items-center h-[54px] pt-1 bg-[#ebebeb]">
      <input aria-label="名称框" defaultValue="B332" className="w-[153px] h-7 pl-9 bg-white border border-l-0 border-[#ddd] rounded-r-sm font-['Liberation_Serif',serif] text-[16px] outline-none" />
      <span className="-ml-3"><svg width="7" height="4"><path d="M0 0h7L3.500 4z" fill="#888" /></svg></span>
      <span className="ml-[58px]"><Svg w={22} h={22}><circle cx="9" cy="9" r="7.500" stroke="#555" strokeWidth="1.500" /><path d="M6 8h6M6 11h6M14 15l6 6" stroke="#555" strokeWidth="1.500" /></Svg></span>
      <span className="ml-3 w-[27px] font-['Liberation_Serif',serif] italic text-[20px]">fx</span>
      <input aria-label="编辑栏" defaultValue="正交" className="flex-1 min-w-0 h-7 pl-4 bg-white border border-[#ddd] rounded-l-sm outline-none text-[16px]" />
    </div>
    <div className="flex-1 min-h-0 overflow-hidden bg-white">
      <table className="w-full table-fixed border-separate border-spacing-0">
        <thead>
          <tr className="h-[28px] text-[18px] leading-6 text-[#777]">
            <th className="w-[59px] p-0 font-normal bg-[#ececec] border-b border-[#ccc]">A</th>
            <th aria-label="B" className="p-0 bg-[#d3d3d3] border-b-2 border-[#4aa24e]" />
          </tr>
        </thead>
        <tbody>
          {rows.map((r) => (
            <tr key={r.text} className="h-[55px]">
              <td className={`p-0 text-center border-r border-r-black border-b text-[20px] ${r.no ? 'bg-[#69437f] text-white border-b-black' : 'border-b-[#ccc]'}`}>{r.no}</td>
              <td className={`p-0 pl-[3px] border-b border-black ${r.no ? 'bg-[#464580] text-white text-[20px]' : 'text-black text-[18px]'}`}>{r.text}</td>
            </tr>
          ))}
          {[1, 2, 3].map((n) => (
            <tr key={n} className="h-[55px]">
              <td className="p-0 border-r border-b border-[#ccc]" />
              <td className="p-0 border-b border-[#ccc]" />
            </tr>
          ))}
        </tbody>
      </table>
    </div>
    <div className="flex items-center h-[27px] bg-[#ececec] text-[#555]">
      <button aria-label="上一个" className="w-[31px] shrink-0 flex justify-center"><ChevronLeft size={20} strokeWidth={1.500} /></button>
      <button aria-label="下一个" className="w-[31px] shrink-0 flex justify-center"><ChevronRight size={20} strokeWidth={1.500} /></button>
      <button aria-label="最后一个" className="w-[44px] shrink-0 flex justify-center pr-3"><Svg w={14} h={16}><path d="M2 1l7 7-7 7M12.500 1v14" stroke="#555" strokeWidth="1.500" /></Svg></button>
      <button className="w-[112px] shrink-0 h-full bg-[#d0d0d0] pl-1">1 基本设置</button>
      <button className="w-[81px] shrink-0 h-full bg-white text-[#3da142] font-bold pl-1">2 绘图</button>
      <button className="flex-1 h-full bg-[#d0d0d0]">3</button>
    </div>
    <div className="h-[33px]" />
  </aside>
);

/* ---------- taskbar ---------- */

const taskApps = [
  {
    name: '微信',
    icon: (
      <Svg w={32} h={30}>
        <ellipse cx="12" cy="11" rx="11" ry="10" fill="#4bc478" stroke="none" /><ellipse cx="22" cy="19" rx="9" ry="8" fill="#e8ebea" stroke="none" />
        <path d="M8 8v2M15 8v2" stroke="#1f5137" strokeWidth="2" /><path d="M19 16v2M25 16v2" stroke="#667" strokeWidth="2" />
      </Svg>
    ),
  },
  { name: 'Camtasia', icon: <Svg w={30} h={30}><rect width="30" height="30" rx="2" fill="#5a9e12" stroke="none" /><path d="M24 6H12c-6 0-6 2-6 5v8c0 4 2 5 6 5h12" stroke="#fff" strokeWidth="4" /></Svg> },
  { name: 'WPS', icon: <Svg w={28} h={28}><rect width="28" height="28" rx="4" fill="#2c82ee" stroke="none" /><path d="M5 9h4l3 10 3-10 3 10 4-10h-6" stroke="#fff" strokeWidth="2" /></Svg> },
  { name: 'AutoCAD', icon: <span className="size-[30px] bg-[#f6ebe8] flex items-center justify-center"><AutodeskA size={24} color="#b3202a" /></span> },
  { name: 'Camtasia 录制', icon: <Svg w={30} h={30}><rect width="30" height="30" rx="3" fill="#f2503b" stroke="none" /><path d="M24 6H12c-6 0-6 2-6 5v8c0 4 2 5 6 5h12" stroke="#fff" strokeWidth="4" /></Svg> },
];

const Taskbar = () => (
  <div className="relative h-[50px] flex bg-linear-to-r from-[#273b43] via-[#22343f] to-[#1b2643] text-[#eef1f5]">
    <span className="absolute left-3 top-[2px] z-10 pointer-events-none opacity-40 flex items-center gap-2 h-[38px] text-[#c5ccd0] font-bold text-[36px] leading-8">
      <span className="w-[38px] h-[38px] rounded-md bg-[#c5ccd0] flex items-center justify-center"><Svg w={28} h={24}><path d="M0 12C4 2 14 0 28 9v5z" fill="#2c3a40" stroke="none" /></Svg></span>
      tafe.cc
    </span>
    <button aria-label="开始" className="relative z-20 w-[63px] flex items-center pl-5">
      <Svg><path d="M0 3l9-1v7.500H0zM10 2l10-2v9.500H10zM0 10.500h9V18l-9-1zM10 10.500h10V20l-10-2z" fill="#fff" stroke="none" /></Svg>
    </button>
    {taskApps.map((a) => (
      <button key={a.name} aria-label={a.name} className={`relative w-[62px] flex items-center justify-center ${a.name === 'AutoCAD' ? 'bg-[#4f6068]' : ''}`}>
        {a.icon}
        <span className={`absolute bottom-0 h-[3px] bg-[#79b5e4] ${a.name === 'AutoCAD' ? 'w-full' : 'w-[51px]'}`} />
      </button>
    ))}
    <div className="ml-auto flex items-center">
      <ChevronUp size={24} strokeWidth={1.500} />
      <span className="ml-[9px]"><Svg w={14} h={20}><rect x="3" y="0" width="8" height="13" rx="1" fill="#fff" stroke="none" /><path d="M1 10v5h12v-5M7 15v4M4 19.500h6" stroke="#fff" /></Svg></span>
      <span className="ml-[14px]"><Svg w={20} h={20}><path d="M10 0l9 3v7c0 5-5 8-9 10-4-2-9-5-9-10V3z" fill="#e4efff" stroke="none" /><path d="M10 3l6 2v5c0 4-3 5-6 7-3-2-6-3-6-7V5z" fill="#2a7df0" stroke="none" /><path d="M6 8l4 3 4-3" stroke="#fff" strokeWidth="2" /></Svg></span>
      <span className="ml-[9px]"><Svg><path d="M7 3.500h12.500v10H4V9M12 14v4M7 18.500h10M1 1.500h5v5H1zM3.500 7v7" stroke="#eef1f5" /></Svg></span>
      <span className="ml-[10px]"><Svg><path d="M1 7h3l4-4v14l-4-4H1z" stroke="#eef1f5" /><path d="M11 8a3 3 0 010 4M14 6a6 6 0 010 8" stroke="#c5ccd5" /><path d="M17 4a9 9 0 010 12" stroke="#66758a" /></Svg></span>
      <span className="ml-3 w-[31px]">ENG</span>
      <span className="ml-[22px] mr-[26px]"><Svg><path d="M.5 1.500h19v14H13l-3 3-3-3H.500z" stroke="#eef1f5" strokeWidth="1.500" /></Svg></span>
      <span className="w-[5px] h-[50px] border-l border-[#5c6a80]" />
    </div>
  </div>
);

export default function App() {
  return (
    <div className="h-screen flex flex-col overflow-hidden text-[15px] leading-5 font-['Open_Sans','Noto_Sans_CJK_SC',sans-serif]">
      <div className="flex-1 min-h-0 flex">
        <div className="flex-1 min-w-0 flex flex-col overflow-hidden whitespace-nowrap bg-[#222733] border-l-4 border-l-[#0aa5ee] border-t border-r border-b border-t-[#2384a8] border-r-[#2384a8] border-b-[#2384a8]">
          <TitleBar />
          <MenuBar />
          <RibbonTabs />
          <Ribbon />
          <FileTabs />
          <ModelSpace />
          <StatusBar />
        </div>
        <Spreadsheet />
      </div>
      <Taskbar />
    </div>
  );
}
